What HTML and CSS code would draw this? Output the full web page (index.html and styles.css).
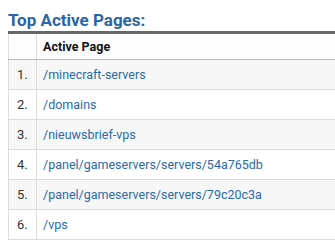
FILE: index.html
```html
<!DOCTYPE html>
<html>
<head>
<meta charset="utf-8">
<link rel="stylesheet" href="styles.css">
</head>
<body>
<h2 class="title">Top Active Pages:</h2>
<div class="clip">
<table class="pages">
  <thead>
    <tr><th class="num"></th><th>Active Page</th></tr>
  </thead>
  <tbody>
    <tr><td class="num">1.</td><td class="link">/minecraft-servers</td></tr>
    <tr><td class="num">2.</td><td class="link">/domains</td></tr>
    <tr><td class="num">3.</td><td class="link">/nieuwsbrief-vps</td></tr>
    <tr><td class="num">4.</td><td class="link">/panel/gameservers/servers/54a765db</td></tr>
    <tr><td class="num">5.</td><td class="link">/panel/gameservers/servers/79c20c3a</td></tr>
    <tr><td class="num">6.</td><td class="link">/vps</td></tr>
  </tbody>
</table>
</div>
</body>
</html>
```
FILE: styles.css
```css
html { overflow: hidden; background: #fff; }
body {
  margin: 0;
  padding: 10px 0 0 8px;
  font-family: Roboto, "Liberation Sans", sans-serif;
  color: #333;
}
.title {
  margin: 0;
  font-size: 17px;
  line-height: 20px;
  font-weight: 700;
  color: #2866a5;
  height: 21px;
}
.clip { overflow: hidden; }
.pages {
  border-collapse: collapse;
  width: 100%;
  font-size: 12.5px;
  border-top: 3px solid #666;
  border-left: 1px solid #ddd;
}
.pages th {
  height: 25px;
  text-align: left;
  font-weight: 700;
  font-size: 12.5px;
  color: #111;
  background: #fdfdfd;
  border-bottom: 1px solid #bbb;
  padding: 0 0 0 6px;
}
.pages td {
  height: 29px;
  padding: 0 0 0 6px;
  border-bottom: 1px solid #ddd;
}
.pages .num {
  width: 19px;
  padding-left: 8px;
  border-right: 1px solid #ddd;
  color: #333;
  font-size: 13px;
}
.pages tbody tr:nth-child(odd) td { background: #f7f7f7; }
.pages .link { color: #2a6aa8; }
```
